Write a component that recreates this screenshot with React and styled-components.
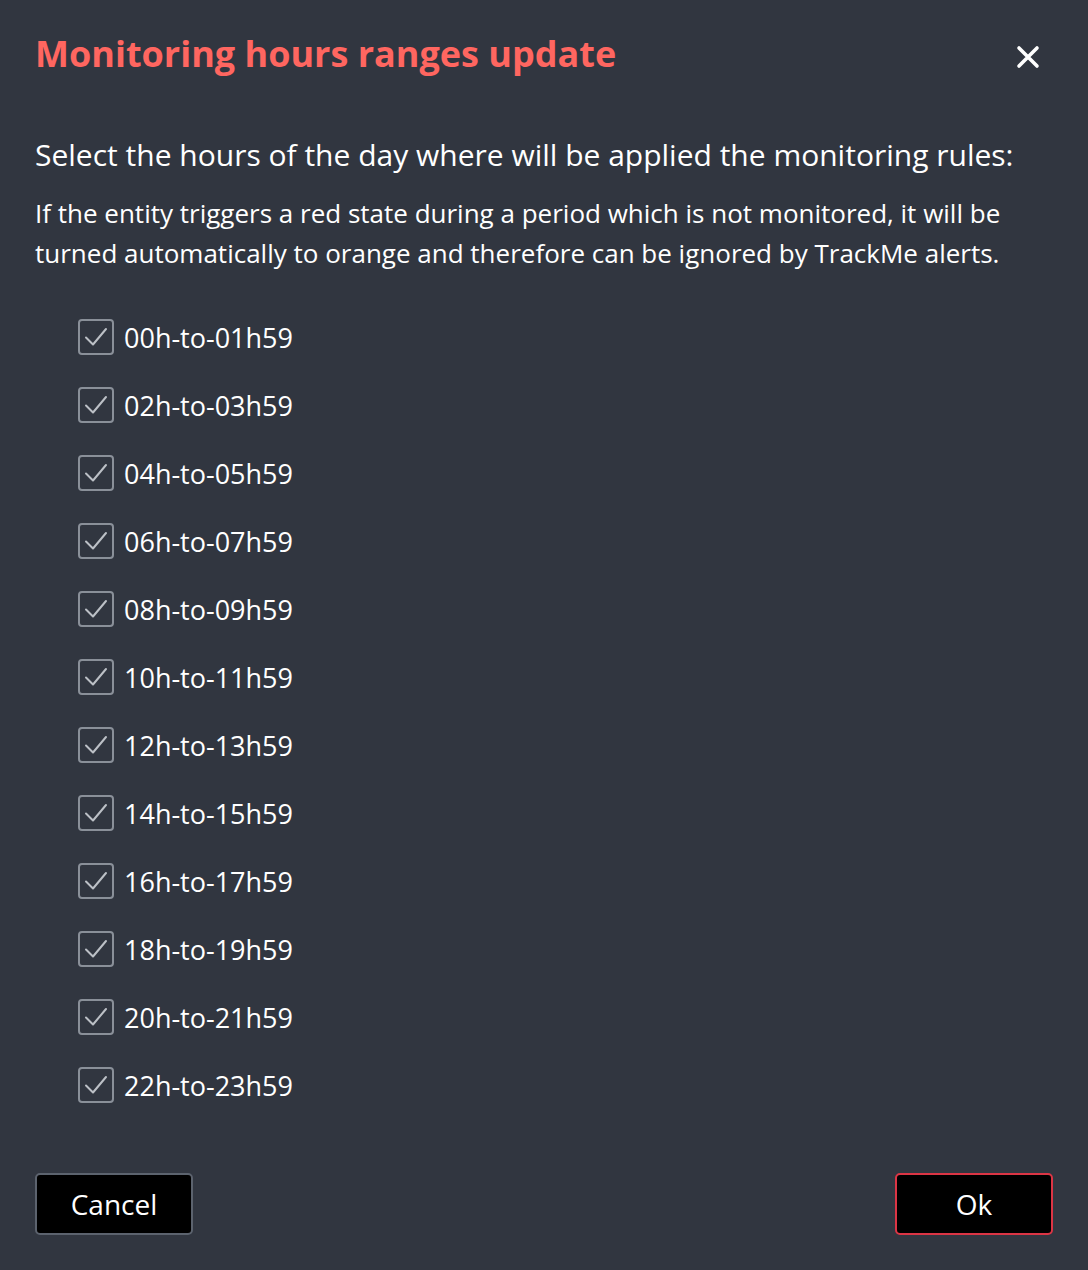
import React from 'react';
import styled, { createGlobalStyle } from 'styled-components';

const GlobalStyle = createGlobalStyle`
  html, body {
    margin: 0;
    padding: 0;
    background: #313640;
  }
  body {
    font-family: "Open Sans", "Noto Sans", sans-serif;
    color: #ffffff;
  }
`;

const Modal = styled.div`
  width: 1088px;
  height: 1270px;
  box-sizing: border-box;
  background: #313640;
  display: flex;
  flex-direction: column;
  padding: 0 35px;
`;

const Header = styled.div`
  display: flex;
  align-items: center;
  justify-content: space-between;
  height: 106px;
`;

const Title = styled.h1`
  margin: 0;
  font-size: 36px;
  font-weight: 700;
  color: #ff6660;
`;

const CloseButton = styled.button`
  background: none;
  border: none;
  padding: 0;
  margin-right: 13px;
  margin-top: 8px;
  cursor: pointer;
  display: flex;
`;

const Lead = styled.p`
  margin: 0;
  font-size: 30px;
  line-height: 40px;
  padding-top: 29px;
`;

const Note = styled.p`
  margin: 18px 0 0;
  font-size: 26px;
  line-height: 40px;
`;

const List = styled.div`
  display: flex;
  flex-direction: column;
  gap: 32px;
  padding: 46px 0 0 43px;
`;

const Row = styled.label`
  display: flex;
  align-items: center;
  gap: 10px;
  font-size: 27px;
  height: 36px;
`;

const Box = styled.span`
  width: 36px;
  height: 36px;
  box-sizing: border-box;
  border: 2px solid #8a9099;
  border-radius: 4px;
  display: flex;
  align-items: center;
  justify-content: center;
`;

const Footer = styled.div`
  margin-top: auto;
  margin-bottom: 35px;
  display: flex;
  justify-content: space-between;
`;

const Button = styled.button`
  width: 158px;
  height: 62px;
  box-sizing: border-box;
  background: #000000;
  color: #ffffff;
  font-family: "Open Sans", "Noto Sans", sans-serif;
  font-size: 28px;
  border: 2px solid ${p => (p.$primary ? '#dc3545' : '#5c636e')};
  border-radius: 5px;
  cursor: pointer;
`;

const ranges = [];
for (let h = 0; h < 24; h += 2) {
  const a = String(h).padStart(2, '0');
  const b = String(h + 1).padStart(2, '0');
  ranges.push(`${a}h-to-${b}h59`);
}

const Check = () => (
  <svg width="26" height="26" viewBox="0 0 26 26" fill="none">
    <path d="M3 13.5 L10 20.5 L23 5" stroke="#bcc0c6" strokeWidth="2" strokeLinecap="round" strokeLinejoin="round" />
  </svg>
);

export default function App() {
  return (
    <>
      <GlobalStyle />
      <Modal>
        <Header>
          <Title>Monitoring hours ranges update</Title>
          <CloseButton aria-label="close">
            <svg width="24" height="24" viewBox="0 0 24 24">
              <path d="M3 3 L21 21 M21 3 L3 21" stroke="#ffffff" strokeWidth="3.6" strokeLinecap="round" />
            </svg>
          </CloseButton>
        </Header>
        <Lead>Select the hours of the day where will be applied the monitoring rules:</Lead>
        <Note>
          If the entity triggers a red state during a period which is not monitored, it will be
          turned automatically to orange and therefore can be ignored by TrackMe alerts.
        </Note>
        <List>
          {ranges.map(r => (
            <Row key={r}>
              <Box><Check /></Box>
              {r}
            </Row>
          ))}
        </List>
        <Footer>
          <Button>Cancel</Button>
          <Button $primary>Ok</Button>
        </Footer>
      </Modal>
    </>
  );
}
